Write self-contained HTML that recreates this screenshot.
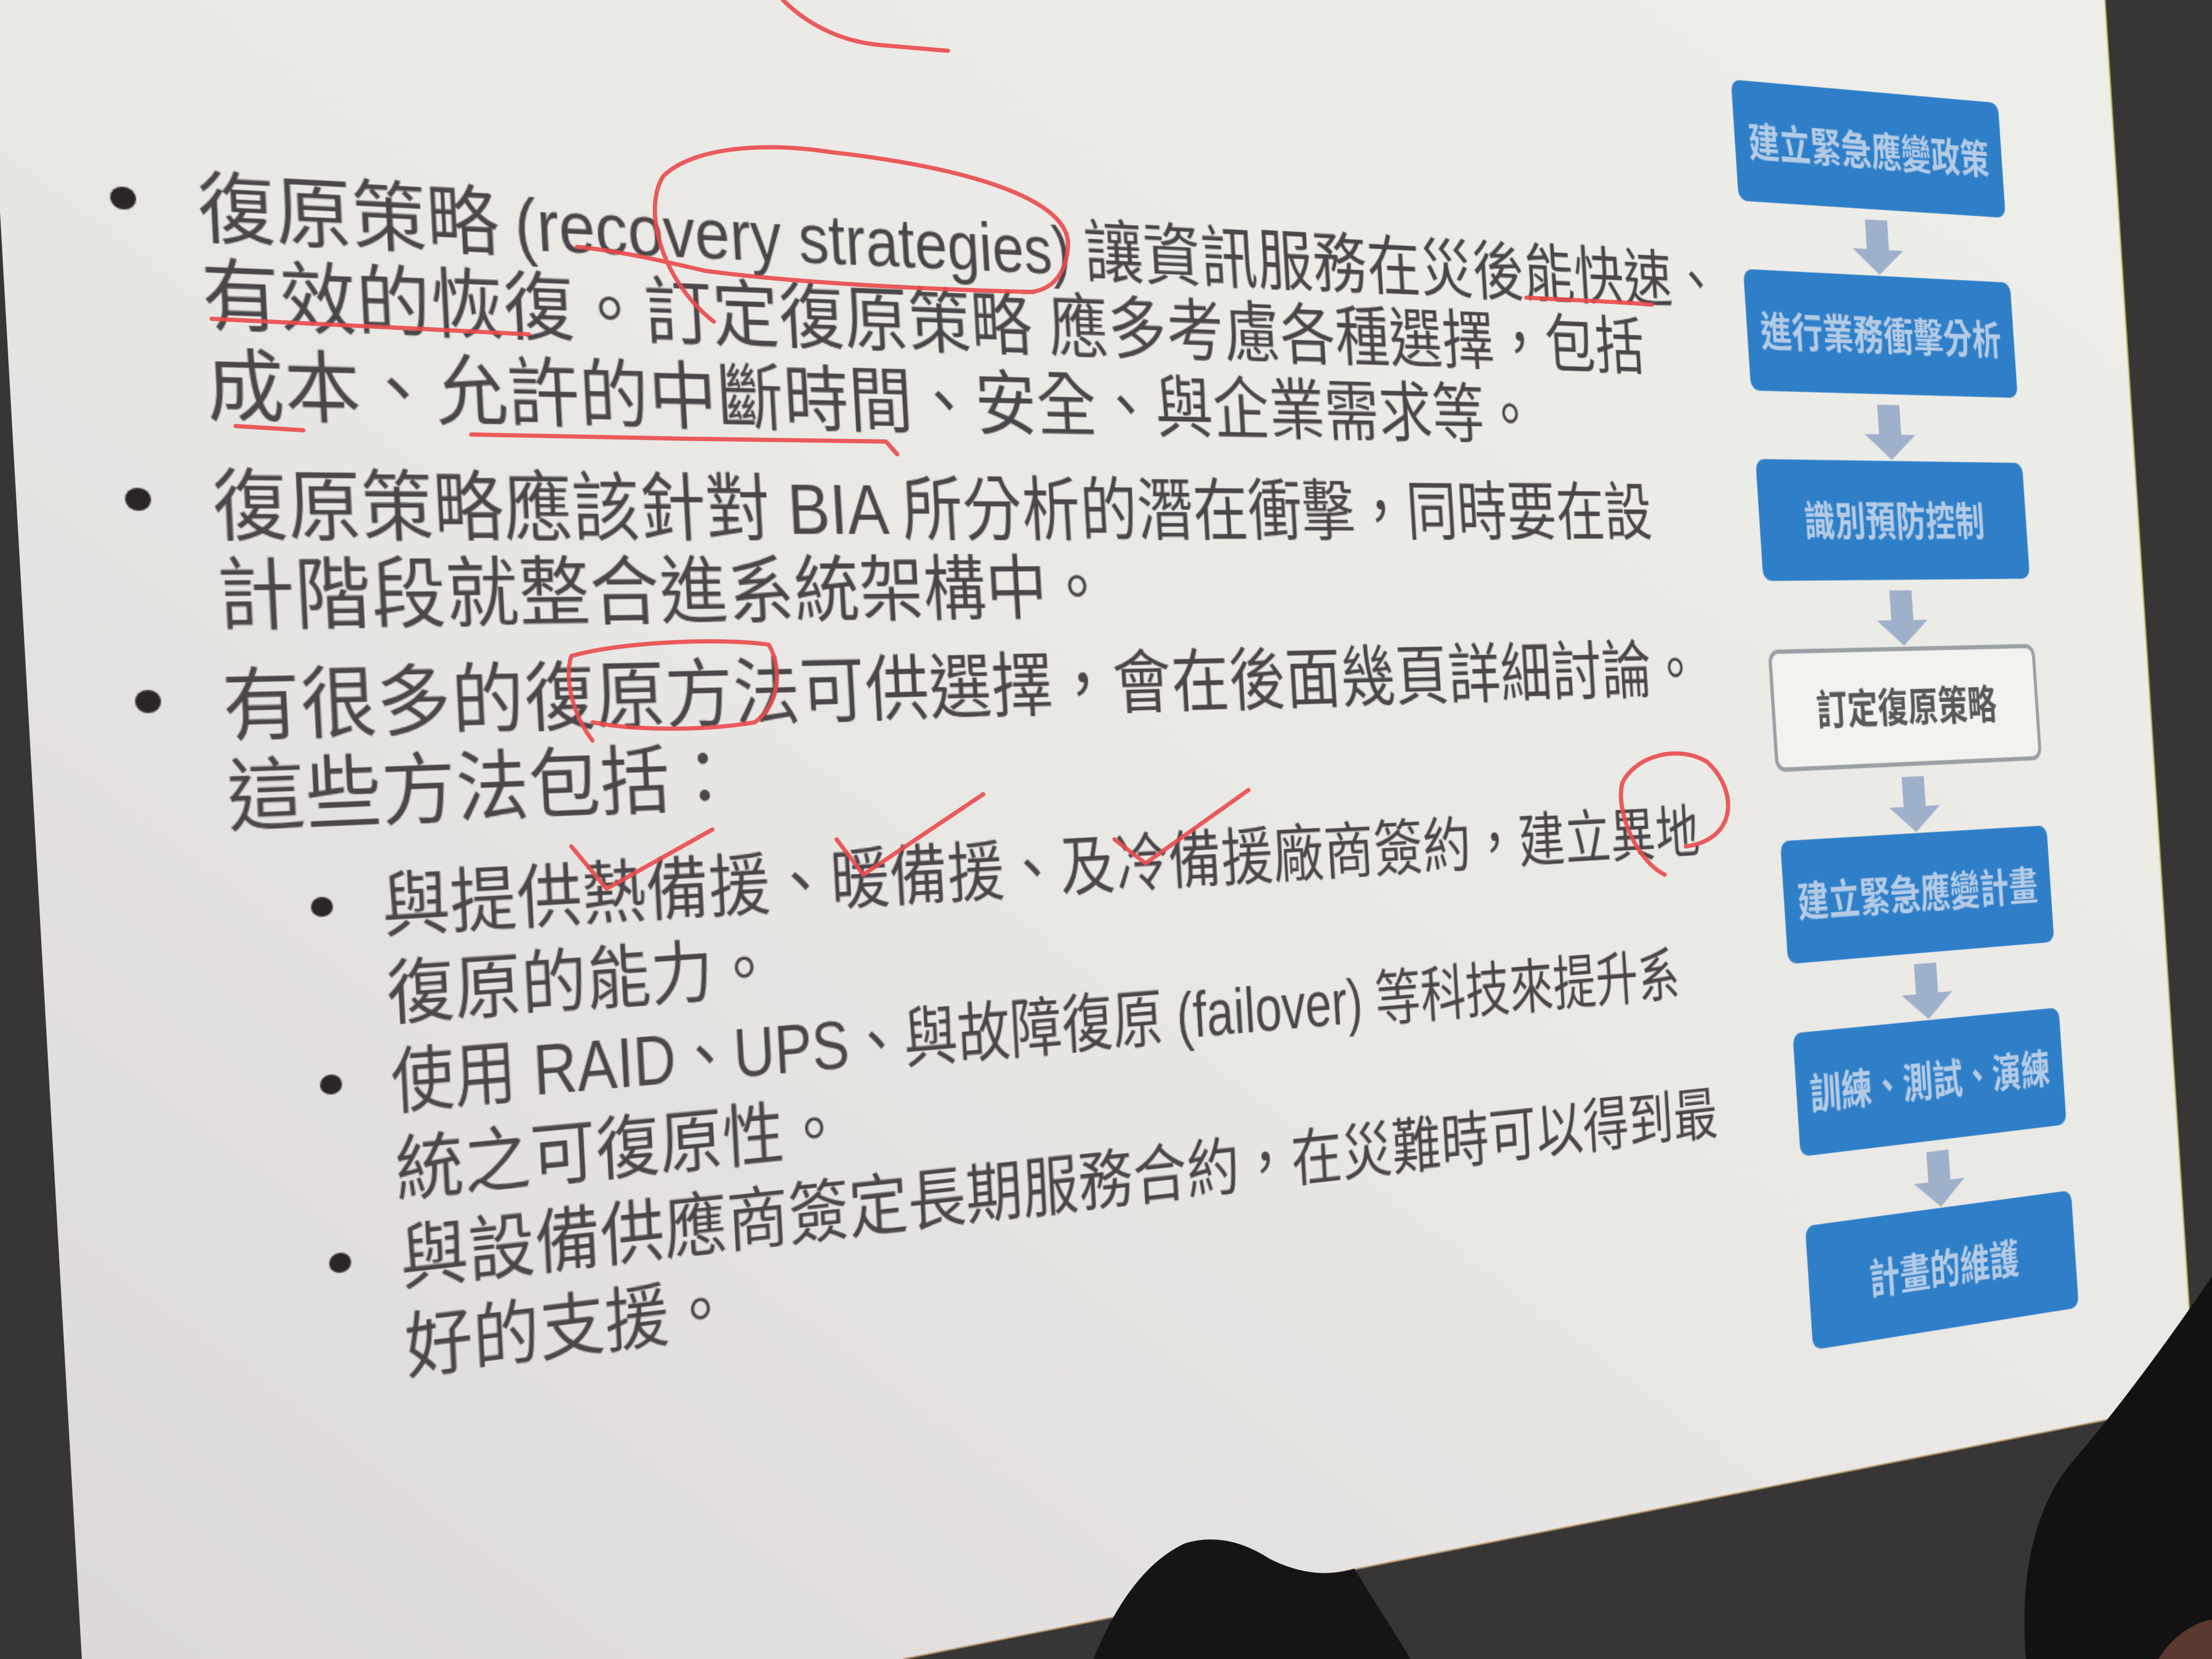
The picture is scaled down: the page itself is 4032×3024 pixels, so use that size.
<!DOCTYPE html>
<html><head><meta charset="utf-8">
<style>
html,body{margin:0;padding:0;background:#363533;width:4032px;height:3024px;overflow:hidden;}
#wrap{position:relative;width:4032px;height:3024px;overflow:hidden;clip-path:inset(0);contain:paint;}
.abs{position:absolute;left:0;top:0;}
#flat{position:absolute;left:0;top:0;width:1766px;height:750px;transform-origin:0 0;
transform:matrix3d(2.64463,0.204887,0,0.00020988, 0.124300,2.562423,0,-0.00001319, 0,0,1,0, 362.571,429.429,0,1);}
#flat svg{position:absolute;left:-80px;top:-220px;overflow:visible;}
.t{font-family:"Liberation Sans","Noto Sans CJK TC",sans-serif;fill:#4a4649;}
.bx{font-family:"Liberation Sans","Noto Sans CJK TC",sans-serif;font-weight:bold;}
</style></head><body><div id="wrap">
<svg class="abs" width="4032" height="3024" viewBox="0 0 1568 1176">
<defs>
<linearGradient id="sg" x1="1" y1="0" x2="0" y2="1">
<stop offset="0" stop-color="#efefe9"/>
<stop offset="0.5" stop-color="#e9e8e4"/>
<stop offset="1" stop-color="#dcd8da"/>
</linearGradient>
</defs>
<rect width="1568" height="1176" fill="#373634"/>
<polygon points="0,0 1492,0 1556,994 640,1176 58,1176 0,150" fill="url(#sg)"/>
<line x1="1492" y1="0" x2="1556" y2="994" stroke="#d8cf70" stroke-width="1.5" opacity="0.6"/>
<line x1="640" y1="1176" x2="1556" y2="994" stroke="#c9a070" stroke-width="1.5" opacity="0.6"/>
</svg>

<div id="flat">
<svg width="1860" height="1180" viewBox="-80 -220 1860 1180">
<g fill="#2a2628">
<ellipse cx="-52" cy="-24" rx="9" ry="8"/>
<ellipse cx="-52" cy="187" rx="9" ry="8"/>
<ellipse cx="-52" cy="328" rx="9" ry="8"/>
<ellipse cx="64" cy="477" rx="8" ry="7"/>
<ellipse cx="64" cy="603" rx="8" ry="7"/>
<ellipse cx="64" cy="729" rx="8" ry="7"/>
</g>
<g class="t" font-size="56">
<text x="0" y="0">復原策略</text>
<text x="236" y="0" textLength="476" lengthAdjust="spacingAndGlyphs">(recovery strategies)</text>
<text x="725" y="0">讓資訊服務在災後能快速、</text>
<text x="0" y="62">有效的恢復。訂定復原策略 應多考慮各種選擇，包括</text>
<text x="0" y="126">成本、允許的中斷時間、安全、與企業需求等。</text>
<text x="0" y="211" textLength="1300" lengthAdjust="spacingAndGlyphs">復原策略應該針對 BIA 所分析的潛在衝擊，同時要在設</text>
<text x="0" y="274">計階段就整合進系統架構中。</text>
<text x="0" y="352">有很多的復原方法可供選擇，會在後面幾頁詳細討論。</text>
<text x="0" y="416">這些方法包括：</text>
</g>
<g class="t" font-size="51">
<text x="108" y="497">與提供熱備援、暖備援、及冷備援廠商簽約，建立異地</text>
<text x="108" y="560">復原的能力。</text>
<text x="108" y="623" textLength="1190" lengthAdjust="spacingAndGlyphs">使用 RAID、UPS、與故障復原 (failover) 等科技來提升系</text>
<text x="108" y="686">統之可復原性。</text>
<text x="108" y="749">與設備供應商簽定長期服務合約，在災難時可以得到最</text>
<text x="108" y="812">好的支援。</text>
</g>
<g>
<rect x="1426" y="-208" width="337" height="112" rx="10" fill="#2f7fc8"/>
<rect x="1426" y="-33" width="337" height="112" rx="10" fill="#2f7fc8"/>
<rect x="1426" y="142" width="337" height="112" rx="10" fill="#2f7fc8"/>
<rect x="1428" y="319" width="333" height="108" rx="10" fill="#f2f2ee" stroke="#9aa0a6" stroke-width="4"/>
<rect x="1426" y="492" width="337" height="112" rx="10" fill="#2f7fc8"/>
<rect x="1426" y="667" width="337" height="112" rx="10" fill="#2f7fc8"/>
<rect x="1426" y="842" width="337" height="112" rx="10" fill="#2f7fc8"/>
</g>
<g fill="#9fb0cb">
<path d="M1580,-86 h28 v28 h18 l-32,24 l-32,-24 h18z"/>
<path d="M1580,89 h28 v28 h18 l-32,24 l-32,-24 h18z"/>
<path d="M1580,264 h28 v28 h18 l-32,24 l-32,-24 h18z"/>
<path d="M1580,439 h28 v28 h18 l-32,24 l-32,-24 h18z"/>
<path d="M1580,614 h28 v28 h18 l-32,24 l-32,-24 h18z"/>
<path d="M1580,789 h28 v28 h18 l-32,24 l-32,-24 h18z"/>
</g>
<g class="bx" font-size="38" fill="#b4cbe6" text-anchor="middle">
<text x="1594" y="-138">建立緊急應變政策</text>
<text x="1594" y="37">進行業務衝擊分析</text>
<text x="1594" y="212">識別預防控制</text>
<text x="1594" y="387" fill="#5a585a">訂定復原策略</text>
<text x="1594" y="562">建立緊急應變計畫</text>
<text x="1594" y="737">訓練、測試、演練</text>
<text x="1594" y="912">計畫的維護</text>
</g>
</svg>
</div>

<svg class="abs" width="4032" height="3024" viewBox="0 0 1568 1176">
<g fill="none" stroke="#ea4a4c" stroke-width="3" stroke-linecap="round" stroke-linejoin="round" opacity="0.9">
<path d="M555,0 C575,20 600,30 625,32 L672,36"/>
<path d="M506,228 C470,200 455,150 470,125 C490,105 540,100 590,108 C680,118 760,140 757,175 C755,200 740,208 725,207"/>
<path d="M409,175 C440,178 470,185 500,192 C560,200 650,205 733,207"/>
<path d="M150,226 C230,230 300,233 375,237"/>
<path d="M1082,211 C1120,213 1150,214 1171,216"/>
<path d="M167,302 L215,305"/>
<path d="M334,308 C420,310 540,312 628,313 L636,322"/>
<path d="M420,525 C405,505 400,480 405,465 C440,455 510,452 545,457 C555,475 552,500 535,512 C500,518 450,518 420,512"/>
<path d="M405,600 L430,630 L505,588"/>
<path d="M593,595 L612,620 L697,563"/>
<path d="M790,595 L812,612 L885,560"/>
<path d="M1180,620 C1160,610 1145,575 1150,555 C1160,535 1190,528 1210,540 C1232,560 1232,595 1195,600"/>
</g>
<path d="M1436,1176 C1432,1120 1440,1070 1470,1035 C1500,1000 1530,960 1568,905 L1568,1176 Z" fill="#121212"/>
<path d="M775,1176 C790,1140 810,1108 840,1094 C860,1088 880,1092 900,1105 C920,1115 940,1118 960,1112 L1000,1176 Z" fill="#151515"/>
<path d="M1530,1176 C1540,1160 1555,1150 1568,1148 L1568,1176Z" fill="#5a3a30"/>
</svg>
</div></body></html>
